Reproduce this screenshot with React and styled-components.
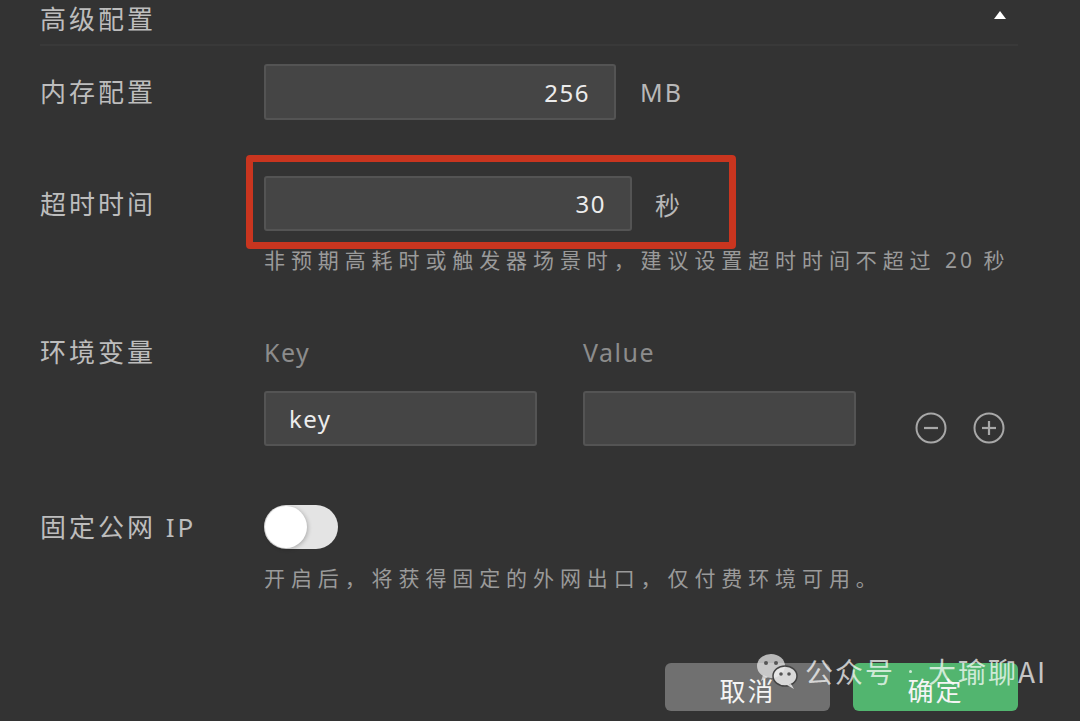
import React from "react";
import styled, { createGlobalStyle } from "styled-components";

const Global = createGlobalStyle`
  html, body { margin: 0; padding: 0; background: #333333; }
  body { font-family: "Noto Sans", "Noto Sans CJK SC", sans-serif; }
  * { box-sizing: border-box; }
`;

const Page = styled.div`
  position: relative;
  width: 1080px;
  height: 721px;
  overflow: hidden;
  background: #333333;
  padding: 0 62px 0 40px;
  font-family: "Noto Sans", "Noto Sans CJK SC", sans-serif;
`;

const Header = styled.div`
  height: 46px;
  display: flex;
  justify-content: space-between;
  align-items: flex-start;
  border-bottom: 2px solid #393939;
`;

const Title = styled.div`
  font-size: 26px;
  line-height: 36px;
  letter-spacing: 3px;
  color: #bdbdbd;
  font-family: "Noto Sans CJK SC", sans-serif;
`;

const Caret = styled.span`
  margin: 11px 12px 0 0;
  width: 0;
  height: 0;
  border-left: 6px solid transparent;
  border-right: 6px solid transparent;
  border-bottom: 8px solid #ffffff;
`;

const Row = styled.div`
  display: grid;
  grid-template-columns: 224px 1fr;
  align-items: ${(p) => p.$align || "center"};
  margin-top: ${(p) => p.$mt}px;
`;

const Label = styled.div`
  font-size: 26px;
  line-height: 30px;
  letter-spacing: 3px;
  color: #bdbdbd;
  font-family: "Noto Sans", "Noto Sans CJK SC", sans-serif;
`;

const Field = styled.div`
  position: relative;
  display: flex;
  align-items: center;
  gap: ${(p) => p.$gap}px;
`;

const Input = styled.div`
  width: ${(p) => p.$w}px;
  height: ${(p) => p.$h || 55}px;
  background: #454545;
  border: 2px solid #545454;
  border-radius: 3px;
  display: flex;
  align-items: center;
  justify-content: ${(p) => (p.$left ? "flex-start" : "flex-end")};
  padding: 0 24px 0 23px;
  font-size: 24px;
  letter-spacing: 1.5px;
  color: #ececec;
`;

const Unit = styled.span`
  font-size: 25px;
  letter-spacing: 2px;
  color: #b8b8b8;
  font-family: "Noto Sans", "Noto Sans CJK SC", sans-serif;
`;

const Highlight = styled.div`
  position: absolute;
  left: -18px;
  top: -21px;
  width: 490px;
  height: 94px;
  border: 7px solid #c9351f;
  border-radius: 4px;
  pointer-events: none;
`;

const Help = styled.div`
  margin: ${(p) => p.$mt}px 0 0 224px;
  font-size: 21px;
  line-height: 30px;
  letter-spacing: 5.9px;
  color: #9a9a9a;
  white-space: nowrap;
  font-family: "Noto Sans", "Noto Sans CJK SC", sans-serif;
`;

const Num = styled.span`
  letter-spacing: 3px;
`;

const EnvGrid = styled.div`
  display: grid;
  grid-template-columns: 273px 273px auto;
  column-gap: 46px;
  row-gap: 24px;
  align-items: end;
`;

const ColHead = styled.div`
  font-size: 25px;
  line-height: 30px;
  letter-spacing: 1.5px;
  color: #8c8c8c;
`;

const IconRow = styled.div`
  display: flex;
  gap: 26px;
  margin: 0 0 2px 13px;
`;

const CircleBtn = styled.svg`
  width: 32px;
  height: 32px;
  display: block;
`;

const Toggle = styled.div`
  position: relative;
  width: 74px;
  height: 44px;
  border-radius: 22px;
  background: #e4e4e4;
`;

const Knob = styled.div`
  position: absolute;
  left: 1px;
  top: 1px;
  width: 42px;
  height: 42px;
  border-radius: 50%;
  background: #ffffff;
  box-shadow: 1px 1px 4px rgba(0, 0, 0, 0.25);
`;

const Footer = styled.div`
  display: flex;
  justify-content: flex-end;
  gap: 23px;
  margin-top: 70px;
`;

const Button = styled.div`
  width: 165px;
  height: 48px;
  border-radius: 6px;
  background: ${(p) => (p.$primary ? "#52b56f" : "#707070")};
  color: #f4f4f4;
  font-size: 26px;
  letter-spacing: 2px;
  display: flex;
  align-items: center;
  justify-content: center;
  font-family: "Noto Sans CJK SC", sans-serif;
  padding-top: 4px;
`;

const Watermark = styled.div`
  position: absolute;
  left: 755px;
  top: 651px;
  display: flex;
  align-items: center;
  gap: 6px;
  color: rgba(255, 255, 255, 0.72);
  font-size: 28px;
  letter-spacing: 2px;
  font-family: "Noto Sans CJK SC", sans-serif;
  pointer-events: none;
`;

const WmText = styled.span`
  display: flex;
  align-items: center;
`;

const WmDot = styled.span`
  display: inline-block;
  width: 3px;
  height: 3px;
  border-radius: 50%;
  background: rgba(255, 255, 255, 0.72);
  margin: 0 16px 0 14px;
`;

const WmIcon = styled.svg`
  width: 44px;
  height: 40px;
  display: block;
`;

const Minus = () => (
  <CircleBtn viewBox="0 0 32 32">
    <circle cx="16" cy="16" r="14.5" fill="none" stroke="#a8a8a8" strokeWidth="2" />
    <line x1="9" y1="16" x2="23" y2="16" stroke="#a8a8a8" strokeWidth="2.2" />
  </CircleBtn>
);

const Plus = () => (
  <CircleBtn viewBox="0 0 32 32">
    <circle cx="16" cy="16" r="14.5" fill="none" stroke="#a8a8a8" strokeWidth="2" />
    <line x1="9" y1="16" x2="23" y2="16" stroke="#a8a8a8" strokeWidth="2.2" />
    <line x1="16" y1="9" x2="16" y2="23" stroke="#a8a8a8" strokeWidth="2.2" />
  </CircleBtn>
);

export default function App() {
  return (
    <>
      <Global />
      <Page>
        <Header>
          <Title>高级配置</Title>
          <Caret />
        </Header>

        <Row $mt={18}>
          <Label>内存配置</Label>
          <Field $gap={24}>
            <Input $w={352} $h={56}>256</Input>
            <Unit>MB</Unit>
          </Field>
        </Row>

        <Row $mt={56}>
          <Label>超时时间</Label>
          <Field $gap={23}>
            <Input $w={368}>30</Input>
            <Unit>秒</Unit>
            <Highlight />
          </Field>
        </Row>
        <Help $mt={14}>
          非预期高耗时或触发器场景时，建议设置超时时间不超过<Num> 20 </Num>秒
        </Help>

        <Row $mt={62} $align="start">
          <Label>环境变量</Label>
          <EnvGrid>
            <ColHead>Key</ColHead>
            <ColHead>Value</ColHead>
            <span />
            <Input $w={273} $left>key</Input>
            <Input $w={273} $left />
            <IconRow>
              <Minus />
              <Plus />
            </IconRow>
          </EnvGrid>
        </Row>

        <Row $mt={59}>
          <Label>固定公网 IP</Label>
          <Field $gap={0}>
            <Toggle>
              <Knob />
            </Toggle>
          </Field>
        </Row>
        <Help $mt={14}>开启后，将获得固定的外网出口，仅付费环境可用。</Help>

        <Footer>
          <Button>取消</Button>
          <Button $primary>确定</Button>
        </Footer>

        <Watermark>
          <WmIcon viewBox="0 0 44 40">
            <ellipse cx="16" cy="15" rx="14" ry="12" fill="rgba(230,230,230,0.75)" />
            <path d="M8 24 L6 30 L13 26 Z" fill="rgba(230,230,230,0.75)" />
            <circle cx="11" cy="12" r="2" fill="#555" />
            <circle cx="21" cy="12" r="2" fill="#555" />
            <ellipse cx="30" cy="25" rx="12" ry="10" fill="rgba(235,235,235,0.85)" stroke="#444" strokeWidth="1.5" />
            <path d="M36 33 L39 38 L32 34 Z" fill="rgba(235,235,235,0.85)" />
            <circle cx="26" cy="23" r="1.8" fill="#555" />
            <circle cx="34" cy="23" r="1.8" fill="#555" />
          </WmIcon>
          <WmText>
            公众号<WmDot />大瑜聊AI
          </WmText>
        </Watermark>
      </Page>
    </>
  );
}
